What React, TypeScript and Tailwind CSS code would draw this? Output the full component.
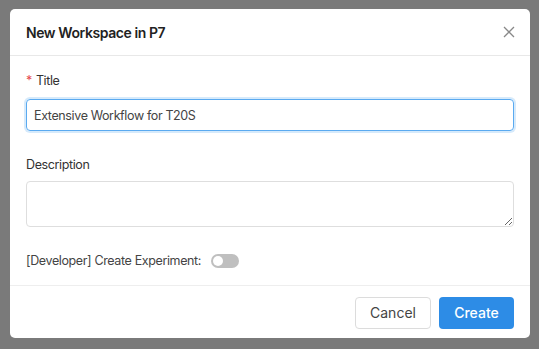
import { useState } from 'react';

export default function App() {
  const [title, setTitle] = useState('Extensive Workflow for T20S');
  const [devExp, setDevExp] = useState(false);

  return (
    <div
      className="w-[539px] h-[349px] bg-[#7a7a7a] pt-[9px] pl-[10px]"
      style={{ fontFamily: 'Inter, "Noto Sans", sans-serif' }}
    >
      <div className="w-[520px] h-[329px] bg-white rounded-[5px] flex flex-col text-[#333]">
        {/* Header */}
        <div className="h-[47px] flex items-center justify-between px-4 border-b border-[#e8e8e8]">
          <h2 className="text-[14px] font-semibold tracking-[-0.03em] text-[#222]">New Workspace in P7</h2>
          <button className="text-[#888] mr-[-1px]">
            <svg width="12" height="12" viewBox="0 0 12 12" stroke="currentColor" strokeWidth="1.3">
              <path d="M1 1L11 11M11 1L1 11" />
            </svg>
          </button>
        </div>

        {/* Body */}
        <div className="flex-1 px-4 pt-[16px]">
          <label className="block text-[12.5px] tracking-[-0.03em] text-[#333] leading-[18px] mb-[9px]">
            <span className="text-[#e5484d] mr-1">*</span>Title
          </label>
          <input
            value={title}
            onChange={(e) => setTitle(e.target.value)}
            className="w-full h-[32px] px-[7px] text-[12.5px] tracking-[-0.03em] text-[#444] border border-[#5aaaf0] rounded-[4px] outline-none shadow-[0_0_0_2px_rgba(90,170,240,0.25)]"
          />

          <label className="block text-[12.5px] tracking-[-0.03em] text-[#333] leading-[18px] mt-[25px] mb-[7px]">Description</label>
          <textarea className="block w-full h-[46px] border border-[#dedede] rounded-[4px] outline-none resize-y" />

          <div className="flex items-center mt-[25px] gap-[10px]">
            <span className="text-[12.5px] tracking-[-0.03em] text-[#444]">[Developer] Create Experiment:</span>
            <button
              onClick={() => setDevExp(!devExp)}
              className={`w-[28px] h-[14px] rounded-full flex items-center px-[2px] ${devExp ? 'bg-[#2d8ce6] justify-end' : 'bg-[#bfbfbf] justify-start'}`}
            >
              <span className="w-[10px] h-[10px] rounded-full bg-white" />
            </button>
          </div>
        </div>

        {/* Footer */}
        <div className="h-[53px] border-t border-[#eeeeee] flex items-center justify-end gap-[8px] px-4 pt-[1px]">
          <button className="w-[76px] h-[32px] border border-[#dcdcdc] rounded-[4px] text-[14px] text-[#444]">Cancel</button>
          <button className="w-[75px] h-[32px] bg-[#2d8ce6] rounded-[4px] text-[14px] font-medium text-white">Create</button>
        </div>
      </div>
    </div>
  );
}
